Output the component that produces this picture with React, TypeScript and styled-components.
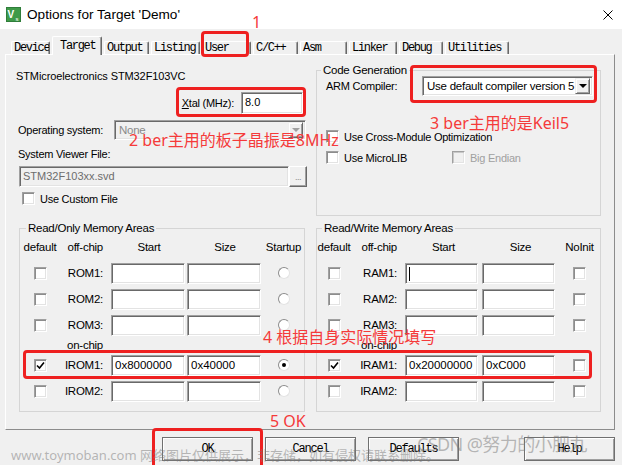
import React from "react";
import styled, { createGlobalStyle } from "styled-components";

const GlobalStyle = createGlobalStyle`
  html, body {
    margin: 0;
    padding: 0;
    background: #f0f0f0;
  }
  body {
    font-family: "Liberation Sans", Arial, sans-serif;
    font-size: 11px;
    letter-spacing: -0.25px;
    color: #000;
  }
`;

const Window = styled.div`
  position: relative;
  width: 622px;
  height: 465px;
  overflow: hidden;
  background: #f0f0f0;
`;

const TitleBar = styled.div`
  height: 29px;
  background: #fff;
  display: flex;
  align-items: center;
  padding: 0 9px 0 6px;
`;

const Title = styled.div`
  flex: 1;
  margin-left: 6px;
  font-family: "Liberation Sans", Arial, sans-serif;
  font-size: 13.6px;
  letter-spacing: 0;
  color: #000;
`;

const TabStrip = styled.div`
  height: 25px;
  display: flex;
  align-items: flex-end;
  gap: 2px;
  padding-left: 11px;
`;

const Tab = styled.div<{ $w: number; $active?: boolean }>`
  position: relative;
  z-index: ${(p) => (p.$active ? 1 : 0)};
  box-sizing: border-box;
  width: ${(p) => p.$w}px;
  height: ${(p) => (p.$active ? 19 : 13)}px;
  margin-bottom: ${(p) => (p.$active ? -1 : 0)}px;
  background: #f0f0f0;
  border-top: 1px solid #fff;
  border-left: 1px solid #fff;
  border-right: 1px solid #696969;
  border-radius: 2px 2px 0 0;
  box-shadow: inset -1px 0 0 #a0a0a0;
  padding: ${(p) => (p.$active ? "3px 0 0 7px" : "0 0 0 2px")};
  font-family: "Liberation Mono", "Courier New", monospace;
  font-size: 12px;
  letter-spacing: -1.3px;
  line-height: 12px;
  white-space: nowrap;
  overflow: hidden;
`;

const Panel = styled.div`
  box-sizing: border-box;
  margin-left: 5px;
  width: 610px;
  height: 376px;
  border: 1px solid;
  border-color: #fff #8c8c8c #8c8c8c #fff;
  padding-left: 13px;
`;

const TopSection = styled.div`
  display: grid;
  grid-template-columns: 288px 285px;
  column-gap: 9px;
`;

const LeftColumn = styled.div`
  display: flex;
  flex-direction: column;
  padding-top: 11px;
`;

const DeviceName = styled.div`
  height: 20px;
  line-height: 20px;
  margin-left: -3px;
  font-size: 11px;
  letter-spacing: -0.1px;
`;

const XtalRow = styled.div`
  margin-top: 6px;
  height: 22px;
  display: flex;
  justify-content: flex-end;
  align-items: center;
  gap: 7px;
  padding-right: 4px;
`;

const FieldRow = styled.div<{ $top: number; $h: number }>`
  margin-top: ${(p) => p.$top}px;
  height: ${(p) => p.$h}px;
  display: flex;
  align-items: center;
`;

const RowLabel = styled.span<{ $w?: number; $shift?: number }>`
  flex: none;
  width: ${(p) => (p.$w ? `${p.$w}px` : "auto")};
  margin-left: ${(p) => p.$shift ?? 0}px;
  white-space: nowrap;
`;

const Field = styled.div<{ $w?: number; $h?: number; $disabled?: boolean }>`
  position: relative;
  box-sizing: border-box;
  flex: none;
  width: ${(p) => (p.$w ? `${p.$w}px` : "100%")};
  height: ${(p) => p.$h ?? 21}px;
  background: ${(p) => (p.$disabled ? "#f0f0f0" : "#fff")};
  border: 1px solid;
  border-color: #a0a0a0 #fff #fff #a0a0a0;
  box-shadow: inset 1px 1px 0 #696969, inset -1px -1px 0 #e3e3e3;
  padding: 2px 3px 0 3px;
  line-height: 14px;
  letter-spacing: 0;
  color: ${(p) => (p.$disabled ? "#6d6d6d" : "#000")};
  white-space: nowrap;
  overflow: hidden;
`;

const Caret = styled.span`
  position: absolute;
  left: 3px;
  top: 3px;
  width: 1px;
  height: 14px;
  background: #000;
`;

const Combo = styled.div<{ $w: number; $disabled?: boolean }>`
  box-sizing: border-box;
  flex: none;
  width: ${(p) => p.$w}px;
  height: 20px;
  display: flex;
  align-items: center;
  background: ${(p) => (p.$disabled ? "#f0f0f0" : "#fff")};
  border: 1px solid;
  border-color: #a0a0a0 #fff #fff #a0a0a0;
  box-shadow: inset 1px 1px 0 #696969, inset -1px -1px 0 #e3e3e3;
  padding: 0 2px 0 4px;
  color: ${(p) => (p.$disabled ? "#8a8a8a" : "#000")};
  font-size: 11.5px;
`;

const ComboText = styled.span`
  flex: 1;
  white-space: nowrap;
  overflow: hidden;
`;

const ComboArrow = styled.span<{ $disabled?: boolean }>`
  box-sizing: border-box;
  flex: none;
  width: 15px;
  height: 16px;
  display: flex;
  align-items: center;
  justify-content: center;
  background: #f0f0f0;
  border: 1px solid;
  border-color: #f0f0f0 #696969 #696969 #f0f0f0;
  box-shadow: inset 1px 1px 0 #fff, inset -1px -1px 0 #a0a0a0;

  &::after {
    content: "";
    border-left: 4px solid transparent;
    border-right: 4px solid transparent;
    border-top: 4px solid ${(p) => (p.$disabled ? "#a0a0a0" : "#000")};
  }
`;

const SmallButton = styled.div`
  box-sizing: border-box;
  flex: none;
  width: 18px;
  height: 21px;
  display: flex;
  align-items: flex-end;
  justify-content: center;
  padding-bottom: 4px;
  border: 1px solid;
  border-color: #fff #696969 #696969 #fff;
  box-shadow: inset -1px -1px 0 #a0a0a0;
  color: #8a8a8a;
  font-size: 9px;
  letter-spacing: -0.5px;
`;

const CheckRow = styled.div<{ $top: number; $first?: number; $indent?: number }>`
  margin-top: ${(p) => p.$top}px;
  margin-left: ${(p) => p.$indent ?? 0}px;
  height: 13px;
  display: flex;
  align-items: center;

  & > :first-child {
    width: ${(p) => (p.$first ? `${p.$first}px` : "auto")};
  }
`;

const CheckItem = styled.label<{ $disabled?: boolean }>`
  display: flex;
  align-items: center;
  gap: 5px;
  color: ${(p) => (p.$disabled ? "#a0a0a0" : "#000")};
  white-space: nowrap;
`;

const Box = styled.span<{ $disabled?: boolean }>`
  box-sizing: border-box;
  flex: none;
  width: 13px;
  height: 13px;
  display: inline-flex;
  align-items: center;
  justify-content: center;
  background: ${(p) => (p.$disabled ? "#f0f0f0" : "#fff")};
  border: 1px solid;
  border-color: #a0a0a0 #fff #fff #a0a0a0;
  box-shadow: inset 1px 1px 0 ${(p) => (p.$disabled ? "#c8c8c8" : "#8c8c8c")},
    inset -1px -1px 0 #e3e3e3;
`;

const Radio = styled.span<{ $on?: boolean }>`
  box-sizing: border-box;
  width: 12px;
  height: 12px;
  border-radius: 50%;
  background: #fff;
  border: 1px solid;
  border-color: #8c8c8c #e3e3e3 #e3e3e3 #8c8c8c;
  display: inline-flex;
  align-items: center;
  justify-content: center;

  &::after {
    content: "";
    display: ${(p) => (p.$on ? "block" : "none")};
    width: 4px;
    height: 4px;
    border-radius: 50%;
    background: #000;
  }
`;

const GroupBox = styled.div<{ $top?: number; $h?: number }>`
  position: relative;
  box-sizing: border-box;
  margin-top: ${(p) => p.$top ?? 0}px;
  height: ${(p) => (p.$h ? `${p.$h}px` : "auto")};
  border: 1px solid #d5d5d5;
`;

const Legend = styled.span<{ $left: number }>`
  position: absolute;
  top: -8px;
  left: ${(p) => p.$left}px;
  padding: 0 2px;
  background: #f0f0f0;
  line-height: 14px;
  font-size: 11.5px;
  white-space: nowrap;
`;

const GroupBody = styled.div`
  padding: 4px 0 0 9px;
  display: flex;
  flex-direction: column;
`;

const CompilerRow = styled.div`
  margin-top: 1px;
  height: 20px;
  display: flex;
  align-items: center;
`;

const BottomSection = styled.div`
  margin-top: 12px;
  display: grid;
  grid-template-columns: 286px 285px;
  column-gap: 11px;
`;

const MemGrid = styled.div<{ $cols: string }>`
  display: grid;
  grid-template-columns: ${(p) => p.$cols};
  grid-template-rows: 19px 22px 22px 22px 10px 22px 22px;
  row-gap: 4px;
  align-items: center;
  padding: 10px 0 9px 0;
  font-size: 11.5px;
`;

const Head = styled.div<{ $align?: string }>`
  align-self: start;
  line-height: 16px;
  text-align: ${(p) => p.$align ?? "center"};
  padding-right: ${(p) => (p.$align === "right" ? 8 : 0)}px;
  white-space: nowrap;
`;

const Center = styled.div`
  display: flex;
  justify-content: center;
`;

const MemLabel = styled.div`
  text-align: right;
  padding-right: 8px;
  white-space: nowrap;
  line-height: 12px;
`;

const ButtonRow = styled.div`
  margin-top: 7px;
  height: 24px;
  display: flex;
  gap: 12px;
  padding: 0 7px 0 162px;
`;

const DlgButton = styled.div<{ $push?: boolean }>`
  box-sizing: border-box;
  width: 91px;
  height: 24px;
  margin-left: ${(p) => (p.$push ? "auto" : "0")};
  display: flex;
  align-items: center;
  justify-content: center;
  border: 1px solid #707070;
  box-shadow: inset 1px 1px 0 #fff, inset -1px -1px 0 #a0a0a0;
  font-family: "Liberation Mono", "Courier New", monospace;
  font-size: 12px;
  letter-spacing: -1.2px;
`;

const Mark = styled.div<{ $x: number; $y: number; $w: number; $h: number }>`
  position: absolute;
  left: ${(p) => p.$x}px;
  top: ${(p) => p.$y}px;
  width: ${(p) => p.$w}px;
  height: ${(p) => p.$h}px;
  box-sizing: border-box;
  border: 3px solid #ee2020;
  border-radius: 4px;
  pointer-events: none;
`;

const Note = styled.div<{ $x: number; $y: number }>`
  position: absolute;
  left: ${(p) => p.$x}px;
  top: ${(p) => p.$y}px;
  font-family: "Noto Sans", "Noto Sans CJK SC", sans-serif;
  font-size: 16px;
  letter-spacing: 0;
  line-height: 22px;
  color: #f53a3a;
  white-space: nowrap;
  pointer-events: none;
`;

const Watermark = styled.div<{ $x: number; $y: number; $size: number; $track?: number }>`
  position: absolute;
  left: ${(p) => p.$x}px;
  top: ${(p) => p.$y}px;
  font-family: "Noto Sans", "Noto Sans CJK SC", sans-serif;
  font-size: ${(p) => p.$size}px;
  letter-spacing: ${(p) => p.$track ?? 0}px;
  line-height: 1.3;
  color: rgba(120, 120, 120, 0.5);
  white-space: nowrap;
  pointer-events: none;
`;

const tabs = [
  { name: "Device", w: 39 },
  { name: "Target", w: 50, active: true },
  { name: "Output", w: 45 },
  { name: "Listing", w: 49 },
  { name: "User", w: 49 },
  { name: "C/C++", w: 45 },
  { name: "Asm", w: 47 },
  { name: "Linker", w: 48 },
  { name: "Debug", w: 44 },
  { name: "Utilities", w: 64 },
];

interface MemRow {
  label: string;
  checked?: boolean;
  start?: string;
  size?: string;
  on?: boolean;
  caret?: boolean;
}

const romRows: MemRow[] = [
  { label: "ROM1:" },
  { label: "ROM2:" },
  { label: "ROM3:" },
  { label: "IROM1:", checked: true, start: "0x8000000", size: "0x40000", on: true },
  { label: "IROM2:" },
];

const ramRows: MemRow[] = [
  { label: "RAM1:", caret: true },
  { label: "RAM2:" },
  { label: "RAM3:" },
  { label: "IRAM1:", checked: true, start: "0x20000000", size: "0xC000" },
  { label: "IRAM2:" },
];

const CheckMark = () => (
  <svg width="9" height="9" viewBox="0 0 9 9">
    <path d="M1 4.5 L3.5 7 L8 1.5" fill="none" stroke="#000" strokeWidth="1.6" />
  </svg>
);

const Checkbox = ({ checked, disabled }: { checked?: boolean; disabled?: boolean }) => (
  <Box $disabled={disabled}>{checked && <CheckMark />}</Box>
);

const AppIcon = () => (
  <svg width="15" height="15" viewBox="0 0 15 15">
    <rect width="15" height="15" fill="#2f7d3a" />
    <rect x="1" y="1" width="13" height="13" fill="#3f9a48" />
    <text x="1.5" y="11" fontSize="10" fontWeight="bold" fill="#fff" fontFamily="Liberation Sans">V</text>
    <text x="9.5" y="13.5" fontSize="6" fill="#fff" fontFamily="Liberation Sans">s</text>
  </svg>
);

const CloseIcon = () => (
  <svg width="10" height="10" viewBox="0 0 10 10">
    <path d="M0.5 0.5 L9.5 9.5 M9.5 0.5 L0.5 9.5" stroke="#000" strokeWidth="1" />
  </svg>
);

interface MemoryGroupProps {
  title: string;
  cols: string;
  legendLeft: number;
  lastHead: string;
  rows: MemRow[];
  fieldW: number;
  radio?: boolean;
}

const MemoryGroup = ({ title, cols, legendLeft, lastHead, rows, fieldW, radio }: MemoryGroupProps) => {
  const renderRow = (row: MemRow) => (
    <React.Fragment key={row.label}>
      <Center>
        <Checkbox checked={row.checked} />
      </Center>
      <MemLabel>{row.label}</MemLabel>
      <Field $w={fieldW}>
        {row.caret && <Caret />}
        {row.start}
      </Field>
      <Field $w={fieldW}>{row.size}</Field>
      <Center>{radio ? <Radio $on={row.on} /> : <Checkbox />}</Center>
    </React.Fragment>
  );

  return (
    <GroupBox>
      <Legend $left={legendLeft}>{title}</Legend>
      <MemGrid $cols={cols}>
        <Head>default</Head>
        <Head $align="right">off-chip</Head>
        <Head>Start</Head>
        <Head>Size</Head>
        <Head>{lastHead}</Head>
        {rows.slice(0, 3).map(renderRow)}
        <div />
        <MemLabel>on-chip</MemLabel>
        <div />
        <div />
        <div />
        {rows.slice(3).map(renderRow)}
      </MemGrid>
    </GroupBox>
  );
};

const App = () => {
  return (
    <Window>
      <GlobalStyle />
      <TitleBar>
        <AppIcon />
        <Title>Options for Target 'Demo'</Title>
        <CloseIcon />
      </TitleBar>

      <TabStrip>
        {tabs.map((t) => (
          <Tab key={t.name} $w={t.w} $active={t.active}>
            {t.name}
          </Tab>
        ))}
      </TabStrip>

      <Panel>
        <TopSection>
          <LeftColumn>
            <DeviceName>STMicroelectronics STM32F103VC</DeviceName>
            <XtalRow>
              <RowLabel>
                <u>X</u>tal (MHz):
              </RowLabel>
              <Field $w={62} $h={22}>8.0</Field>
            </XtalRow>
            <FieldRow $top={6} $h={20}>
              <RowLabel $w={96} $shift={-1}>Operating system:</RowLabel>
              <Combo $w={192} $disabled>
                <ComboText>None</ComboText>
                <ComboArrow $disabled />
              </Combo>
            </FieldRow>
            <FieldRow $top={4} $h={20}>
              <RowLabel $shift={-1}>System Viewer File:</RowLabel>
            </FieldRow>
            <FieldRow $top={2} $h={21}>
              <Field $w={270} $disabled>STM32F103xx.svd</Field>
              <SmallButton>...</SmallButton>
            </FieldRow>
            <CheckRow $top={5} $indent={3}>
              <CheckItem>
                <Checkbox />
                Use Custom File
              </CheckItem>
            </CheckRow>
          </LeftColumn>

          <GroupBox $top={15} $h={146}>
            <Legend $left={4}>Code Generation</Legend>
            <GroupBody>
              <CompilerRow>
                <RowLabel $w={96}>ARM Compiler:</RowLabel>
                <Combo $w={171}>
                  <ComboText>Use default compiler version 5</ComboText>
                  <ComboArrow />
                </Combo>
              </CompilerRow>
              <CheckRow $top={34}>
                <CheckItem>
                  <Checkbox />
                  Use Cross-Module Optimization
                </CheckItem>
              </CheckRow>
              <CheckRow $top={8} $first={126}>
                <CheckItem>
                  <Checkbox />
                  Use MicroLIB
                </CheckItem>
                <CheckItem $disabled>
                  <Checkbox disabled />
                  Big Endian
                </CheckItem>
              </CheckRow>
            </GroupBody>
          </GroupBox>
        </TopSection>

        <BottomSection>
          <MemoryGroup
            title="Read/Only Memory Areas"
            cols="40px 51px 76px 76px 1fr"
            legendLeft={6}
            lastHead="Startup"
            rows={romRows}
            fieldW={74}
            radio
          />
          <MemoryGroup
            title="Read/Write Memory Areas"
            cols="34px 54px 77px 77px 1fr"
            legendLeft={5}
            lastHead="NoInit"
            rows={ramRows}
            fieldW={73}
          />
        </BottomSection>
      </Panel>

      <ButtonRow>
        <DlgButton>OK</DlgButton>
        <DlgButton>Cancel</DlgButton>
        <DlgButton>Defaults</DlgButton>
        <DlgButton $push>Help</DlgButton>
      </ButtonRow>

      <Note $x={252} $y={11}>1</Note>
      <Mark $x={201} $y={31} $w={48} $h={26} />
      <Mark $x={176} $y={87} $w={130} $h={30} />
      <Note $x={129} $y={129}>2 ber主用的板子晶振是8MHz</Note>
      <Mark $x={410} $y={65} $w={187} $h={38} />
      <Note $x={430} $y={112}>3 ber主用的是Keil5</Note>
      <Note $x={263} $y={326}>4 根据自身实际情况填写</Note>
      <Mark $x={23} $y={350} $w={569} $h={29} />
      <Note $x={270} $y={410}>5 OK</Note>
      <Mark $x={152} $y={428} $w={111} $h={45} />

      <Watermark $x={11} $y={447} $size={13}>
        www.toymoban.com 网络图片仅供展示，非存储，如有侵权请联系删除。
      </Watermark>
      <Watermark $x={417} $y={433} $size={18} $track={-0.6}>
        CSDN @努力的小肥丸
      </Watermark>
    </Window>
  );
};

export default App;
